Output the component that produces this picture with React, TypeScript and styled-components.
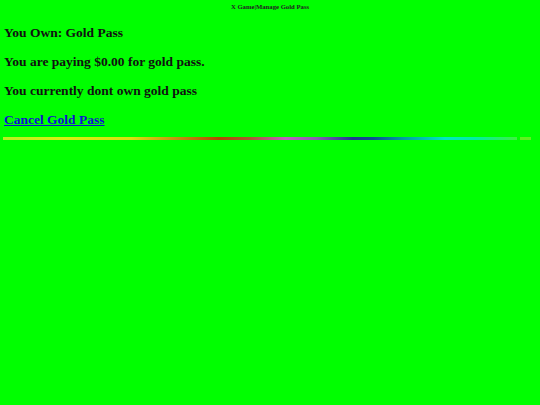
import React from "react";
import styled, { createGlobalStyle } from "styled-components";

const Global = createGlobalStyle`
  html, body {
    margin: 0;
    padding: 0;
    background: #00ff00;
  }
  body {
    font-family: "Liberation Serif", "Times New Roman", serif;
    color: #111;
  }
`;

const Page = styled.div`
  display: flex;
  flex-direction: column;
  min-height: 405px;
  background: #00ff00;
`;

const Title = styled.div`
  height: 14px;
  line-height: 14px;
  text-align: center;
  font-size: 6.7px;
  font-weight: bold;
  color: #222;
`;

const Content = styled.div`
  display: flex;
  flex-direction: column;
  gap: 12px;
  padding: 10px 4px 0 4px;
`;

const Line = styled.div`
  font-size: 13.5px;
  line-height: 17px;
  font-weight: bold;
  white-space: nowrap;
`;

const CancelLink = styled.a`
  color: #1010d0;
  text-decoration: underline;
  cursor: pointer;
`;

const RainbowRow = styled.div`
  display: flex;
  gap: 3px;
  margin: 9px 9px 0 3px;
  height: 3px;
`;

const Rainbow = styled.div`
  flex: 1;
  height: 3px;
  background: linear-gradient(
    to right,
    #b8f020 0%,
    #d8f010 12%,
    #d8e010 25%,
    #c09010 34%,
    #b04a00 42%,
    #a85a30 48%,
    #c060c0 55%,
    #8860b0 61%,
    #203890 68%,
    #0a5090 72%,
    #00a0a0 78%,
    #00e8c0 86%,
    #00f0a0 92%,
    #40f040 100%
  );
`;

const RainbowTail = styled.div`
  width: 11px;
  height: 3px;
  background: #60f020;
`;

export default function App() {
  return (
    <>
      <Global />
      <Page>
        <Title>X Game|Manage Gold Pass</Title>
        <Content>
          <Line>You Own: Gold Pass</Line>
          <Line>You are paying $0.00 for gold pass.</Line>
          <Line>You currently dont own gold pass</Line>
          <Line>
            <CancelLink>Cancel Gold Pass</CancelLink>
          </Line>
        </Content>
        <RainbowRow>
          <Rainbow />
          <RainbowTail />
        </RainbowRow>
      </Page>
    </>
  );
}
